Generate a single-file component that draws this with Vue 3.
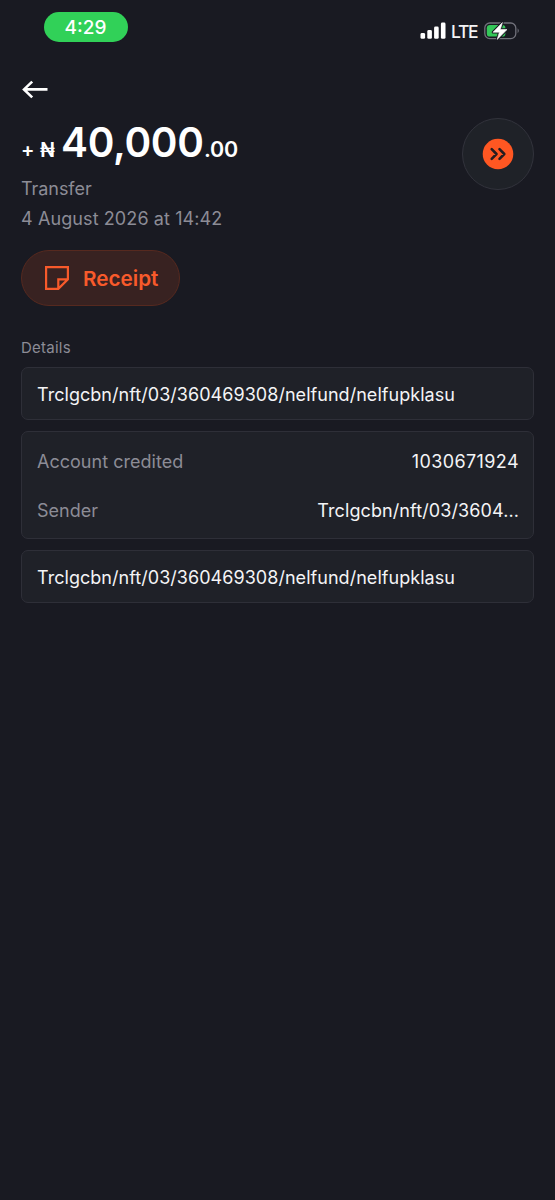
<script setup>
const reference = 'Trclgcbn/nft/03/360469308/nelfund/nelfupklasu'
const rows = [
  { label: 'Account credited', value: '1030671924', kind: 'number' },
  { label: 'Sender', value: 'Trclgcbn/nft/03/3604...', kind: 'sender' },
]
</script>

<template>
  <main class="screen">
    <header class="status">
      <span class="clock">4:29</span>
      <div class="signals">
        <svg class="bars" width="26" height="18" viewBox="0 0 26 18" fill="#fff">
          <rect x="0.5" y="11" width="4.6" height="5.8" rx="1.4" />
          <rect x="7.3" y="8" width="4.6" height="8.8" rx="1.4" />
          <rect x="14.1" y="4.5" width="4.6" height="12.3" rx="1.4" />
          <rect x="20.9" y="0.5" width="4.6" height="16.3" rx="1.4" />
        </svg>
        <span class="network">LTE</span>
        <svg class="battery" width="36" height="20" viewBox="0 0 36 20">
          <rect x="0.8" y="2" width="31" height="15.6" rx="5" fill="none" stroke="#71717b" stroke-width="1.3" />
          <path d="M33.6 7.3q2.4 2.5 0 5z" fill="#71717b" />
          <rect x="2.8" y="4" width="18.6" height="11.6" rx="3.2" fill="#34c759" />
          <path d="M18.4 1.6 9 11.2h6.4l-2.2 7.2L23 8.6h-6.7z" fill="#fff" stroke="#191a22" stroke-width="2.6" stroke-linejoin="round" />
          <path d="M18.4 1.6 9 11.2h6.4l-2.2 7.2L23 8.6h-6.7z" fill="#fff" stroke="#fff" stroke-width="0.6" stroke-linejoin="round" />
        </svg>
      </div>
    </header>

    <nav class="nav">
      <svg width="28" height="22" viewBox="0 0 28 22" fill="none" stroke="#fff" stroke-width="2.6">
        <path d="M11.2 3.6 3 11.4 11.2 19.4M3.2 11.4H26.5" />
      </svg>
    </nav>

    <section class="summary">
      <div class="info">
        <h1 class="amount">
          <span class="plus">+</span><span class="naira">₦</span><span class="major">40,000</span><span class="minor">.00</span>
        </h1>
        <p class="type">Transfer</p>
        <p class="date">4 August 2026 at 14:42</p>
      </div>
      <div class="avatar">
        <svg width="32" height="32" viewBox="0 0 32 32">
          <circle cx="16" cy="16" r="15.3" fill="#ff5722" />
          <path d="M9.7 11.2 14.5 16 9.7 20.8M17.5 11.2 22.3 16 17.5 20.8" fill="none" stroke="#251d20" stroke-width="2.6" stroke-linecap="round" stroke-linejoin="round" />
        </svg>
      </div>
    </section>

    <button class="receipt">
      <svg width="24" height="24" viewBox="0 0 24 24" fill="none" stroke="#f85a2b" stroke-width="2.2">
        <path d="M1.1 1.1H22.9V13.3L13.3 22.9H1.1zM13.3 22.9V13.3H22.9" />
      </svg>
      <span>Receipt</span>
    </button>

    <section class="details">
      <h2>Details</h2>
      <div class="card single">{{ reference }}</div>
      <div class="card list">
        <div v-for="row in rows" :key="row.label" class="row">
          <span class="label">{{ row.label }}</span>
          <span :class="row.kind">{{ row.value }}</span>
        </div>
      </div>
      <div class="card single">{{ reference }}</div>
    </section>
  </main>
</template>

<style>
html,
body {
  background: #191a22;
}
</style>

<style scoped>
* {
  box-sizing: border-box;
}
.screen {
  min-height: 1200px;
  padding: 12px 21px 0;
  background: #191a22;
  color: #f4f4f6;
  font-family: Inter, "Liberation Sans", sans-serif;
}
.status {
  display: flex;
  justify-content: space-between;
  align-items: flex-start;
  height: 64px;
  padding: 0 14px 0 22.5px;
}
.clock {
  width: 84px;
  height: 29.5px;
  border-radius: 15px;
  background: #31d158;
  color: #fff;
  font-size: 19px;
  font-weight: 450;
  line-height: 31px;
  text-align: center;
}
.signals {
  display: flex;
  align-items: center;
  height: 20px;
  margin-top: 9px;
}
.network {
  width: 28px;
  margin: 0 5px;
  font-size: 17.5px;
  font-weight: 450;
  letter-spacing: -1.3px;
  line-height: 20px;
  padding-top: 2px;
}
.nav {
  display: flex;
  height: 44px;
  padding-top: 2px;
}
.summary {
  display: flex;
  justify-content: space-between;
  height: 130px;
}
.amount {
  display: flex;
  align-items: baseline;
  height: 54px;
  margin: 0;
  color: #fff;
  font-weight: 600;
  line-height: 45px;
}
.plus {
  width: 19px;
  font-size: 20px;
}
.naira {
  width: 21px;
  font-size: 19.5px;
}
.major {
  width: 143px;
  font-size: 40.5px;
  font-weight: 580;
  letter-spacing: -0.3px;
}
.minor {
  font-size: 21.5px;
  letter-spacing: -0.2px;
}
.type,
.date {
  margin: 0;
  color: #8c8c96;
  font-size: 18px;
  letter-spacing: 0.1px;
  line-height: 30px;
}
.type {
  letter-spacing: -0.05px;
}
.avatar {
  display: flex;
  align-items: center;
  justify-content: center;
  width: 72px;
  height: 72px;
  margin-top: -2px;
  border: 1.5px solid #32333c;
  border-radius: 50%;
  background: #1f2228;
}
.receipt {
  display: flex;
  align-items: center;
  gap: 14px;
  width: 159px;
  height: 56px;
  padding: 0 0 0 23px;
  border: 1px solid #56291f;
  border-radius: 28px;
  background: #382221;
  color: #f85a2b;
  font: 600 20.7px Inter, sans-serif;
}
.receipt span {
  padding-top: 1px;
}
.details {
  display: flex;
  flex-direction: column;
  gap: 11px;
  padding-top: 31px;
}
h2 {
  height: 19px;
  margin: 0;
  color: #8c8c96;
  font-size: 15px;
  font-weight: 400;
  letter-spacing: 0.25px;
  line-height: 22px;
}
.card {
  border: 1px solid #2e2f38;
  border-radius: 7px;
  background: #1f2128;
  font-size: 18px;
}
.single {
  height: 53px;
  padding: 0 15px;
  letter-spacing: 0.04px;
  line-height: 53px;
}
.list {
  height: 108px;
  padding: 5px 14px 0 15px;
}
.row {
  display: flex;
  justify-content: space-between;
  height: 49px;
  line-height: 49px;
}
.label {
  color: #8c8c96;
  letter-spacing: 0.02px;
}
.number {
  letter-spacing: 0.4px;
}
.sender {
  letter-spacing: 0.1px;
}
</style>
